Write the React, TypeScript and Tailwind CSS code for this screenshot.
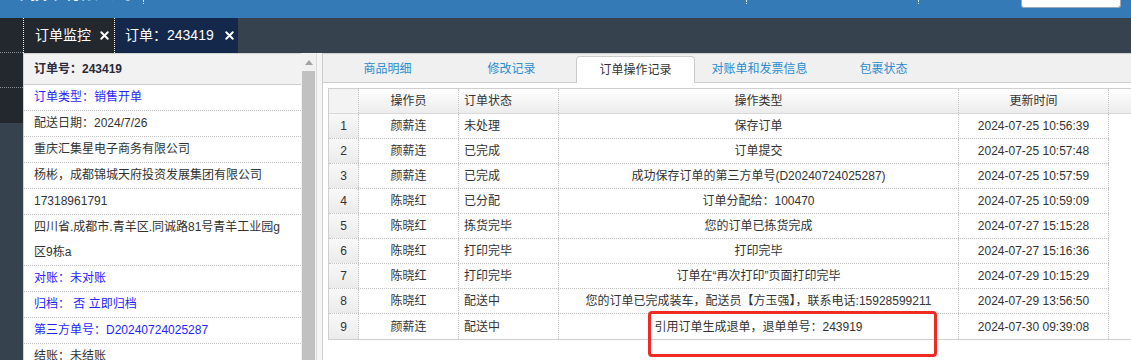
import { X } from "lucide-react";

const FONT = "font-['Liberation_Sans','Noto_Sans_CJK_SC',sans-serif]";

type InfoRow = { text: string; blue?: boolean; lines?: number };

const INFO: InfoRow[] = [
  { text: "订单类型：销售开单", blue: true },
  { text: "配送日期：2024/7/26" },
  { text: "重庆汇集星电子商务有限公司" },
  { text: "杨彬，成都锦城天府投资发展集团有限公司" },
  { text: "17318961791" },
  { text: "四川省.成都市.青羊区.同诚路81号青羊工业园g区9栋a", lines: 2 },
  { text: "对账：未对账", blue: true },
  { text: "归档： 否 立即归档", blue: true },
  { text: "第三方单号：D20240724025287", blue: true },
  { text: "结账：未结账" },
];

const TABS = ["商品明细", "修改记录", "订单操作记录", "对账单和发票信息", "包裹状态"];

const LOGS = [
  { op: "颜薪连", status: "未处理", type: "保存订单", time: "2024-07-25 10:56:39" },
  { op: "颜薪连", status: "已完成", type: "订单提交", time: "2024-07-25 10:57:48" },
  { op: "颜薪连", status: "已完成", type: "成功保存订单的第三方单号(D20240724025287)", time: "2024-07-25 10:57:59" },
  { op: "陈晓红", status: "已分配", type: "订单分配给：100470", time: "2024-07-25 10:59:09" },
  { op: "陈晓红", status: "拣货完毕", type: "您的订单已拣货完成", time: "2024-07-27 15:15:28" },
  { op: "陈晓红", status: "打印完毕", type: "打印完毕", time: "2024-07-27 15:16:36" },
  { op: "陈晓红", status: "打印完毕", type: "订单在“再次打印”页面打印完毕", time: "2024-07-29 10:15:29" },
  { op: "陈晓红", status: "配送中", type: "您的订单已完成装车，配送员【方玉强】，联系电话:15928599211", time: "2024-07-29 13:56:50" },
  { op: "颜薪连", status: "配送中", type: "引用订单生成退单，退单单号：243919", time: "2024-07-30 09:39:08" },
];

const CELL = "border-r border-dotted border-[#c4c4c4] flex items-center";

export default function App() {
  return (
    <div className={`relative w-[1131px] h-[360px] overflow-hidden bg-[#f5f5f5] ${FONT}`}>
      {/* top brand bar, cut off by the window */}
      <div className="flex items-start h-[18px] bg-[#337ab7] overflow-hidden text-white">
        <div className="w-[147px] -mt-[16px] -ml-[4px] text-[17px] leading-[20px] whitespace-nowrap">
          户中技术有限公司 <span className="ml-2">-</span>
        </div>
        <div className="h-[4px] border-l border-dotted border-white/80" />
        <div className="w-[602px]" />
        <div className="h-[4px] border-l border-dotted border-white/80" />
        <div className="w-[171px]" />
        <div className="h-[4px] border-l border-dotted border-white/80" />
        <div className="w-[102px]" />
        <div className="w-[100px] h-[8px] bg-white border border-t-0 border-[#9ab] rounded-b-[3px]" />
      </div>

      <div className="flex h-[342px]">
        {/* side menu strip */}
        <div className="w-[23px] flex flex-col bg-[#37424f]">
          <div className="h-[35px] bg-[#23272e] border-b border-dotted border-[#8a8f96]" />
          <div className="h-[35px] bg-[#23272e] border-b border-dotted border-[#8a8f96]" />
          <div className="h-[35px] bg-[#23272e]" />
        </div>

        <div className="flex-1 flex flex-col min-w-0">
          {/* open page tabs */}
          <div className="flex h-[35px] bg-[#37424f] text-white text-[14px]">
            <div className="flex items-center w-[92px] pl-[11px] bg-[#23272e] border-l border-r border-dotted border-white">
              <span>订单监控</span>
              <X size={13} strokeWidth={3.5} className="ml-[7px]" />
            </div>
            <div className="flex items-center w-[123px] pl-[10px] bg-[#14284b]">
              <span>订单：243419</span>
              <X size={13} strokeWidth={3.5} className="ml-[9px]" />
            </div>
          </div>

          <div className="flex flex-1 min-h-0">
            {/* order info panel */}
            <div className="w-[278px] bg-white border-l border-t border-[#d2d2d2] text-[12px] text-[#333]">
              <div className="h-[31px] flex items-center pl-[10px] bg-[#f2f2f2] border-b border-[#cdcdcd] font-bold text-[#2a2a3a]">
                订单号：243419
              </div>
              {INFO.map((r) => (
                <div
                  key={r.text}
                  className={`pl-[10px] pr-[15px] leading-[25px] border-b border-dotted border-[#c4c4c4] ${r.lines === 2 ? "py-0" : "h-[26px]"} ${r.blue ? "text-[#1f1fff]" : ""}`}
                >
                  {r.text}
                </div>
              ))}
            </div>

            {/* scrollbar */}
            <div className="w-[16px] flex flex-col bg-[#f1f1f1] border-r border-[#dcdcdc]">
              <div className="h-[18px] flex items-center justify-center">
                <div className="w-0 h-0 border-l-[4px] border-r-[4px] border-b-[5px] border-l-transparent border-r-transparent border-b-[#a3a3a3]" />
              </div>
              <div className="flex-1 mx-[1px] bg-[#c1c1c1]" />
            </div>
            <div className="w-[5px]" />

            {/* order detail panel */}
            <div className="flex-1 flex flex-col bg-white border-l border-[#cccccc] min-w-0">
              <div className="h-[30px] flex items-end gap-[5px] pl-[5px] bg-[#f0f0f0] border-t border-b border-[#cfcfcf] text-[12px]">
                {TABS.map((t, i) =>
                  i === 2 ? (
                    <div
                      key={t}
                      className="w-[119px] h-[27px] -mb-px flex items-center justify-center bg-white border border-b-0 border-[#cccccc] rounded-t-[4px] text-[#333]"
                    >
                      {t}
                    </div>
                  ) : (
                    <div key={t} className="w-[119px] h-[27px] flex items-center justify-center text-[#2b8ccf]">
                      {t}
                    </div>
                  ),
                )}
              </div>

              <div className="pt-[5px] pl-[5px]">
                <div className="border-l border-t border-b border-[#cfcfcf] text-[12px] text-[#333]">
                  <div className="flex h-[25px] bg-linear-to-b from-white to-[#ececec] border-b border-[#dadada]">
                    <div className={`${CELL} w-[30px] bg-[#f3f3f3]`} />
                    <div className={`${CELL} w-[100px] justify-center`}>操作员</div>
                    <div className={`${CELL} w-[100px] pl-[5px]`}>订单状态</div>
                    <div className={`${CELL} w-[400px] justify-center`}>操作类型</div>
                    <div className={`${CELL} w-[150px] justify-center`}>更新时间</div>
                    <div className="flex-1" />
                  </div>
                  <div className="w-[780px]">
                    {LOGS.map((r, i) => (
                      <div key={i} className="flex h-[25px] border-b border-dotted border-[#c4c4c4] last:border-b-0">
                        <div className={`${CELL} w-[30px] justify-center bg-linear-to-b from-[#f8f8f8] to-[#ebebeb]`}>{i + 1}</div>
                        <div className={`${CELL} w-[100px] justify-center`}>{r.op}</div>
                        <div className={`${CELL} w-[100px] pl-[5px]`}>{r.status}</div>
                        <div className={`${CELL} w-[400px] justify-center whitespace-nowrap`}>{r.type}</div>
                        <div className={`${CELL} w-[150px] justify-center`}>{r.time}</div>
                      </div>
                    ))}
                  </div>
                </div>
              </div>
            </div>
          </div>
        </div>
      </div>

      {/* annotation drawn over the screenshot */}
      <div className="absolute left-[648px] top-[311px] w-[289px] h-[46px] border-[3px] border-[#ee2a22] rounded-[4px]" />
    </div>
  );
}
